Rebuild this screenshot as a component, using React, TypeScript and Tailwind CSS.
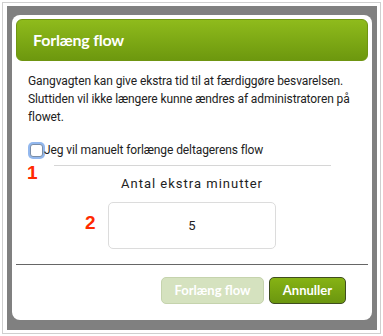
import React from "react";

export default function App() {
  return (
    <div className="w-[383px] h-[336px] bg-white p-[2px]" style={{ fontFamily: "Lato, 'Open Sans', sans-serif" }}>
      <div className="h-[332px] border border-[#cfcfcf] pt-[3px] pl-[4px] pr-[3px] pb-[3px]">
        <div className="h-[324px] bg-[#808080] pl-[5px] pr-[5px] pt-[9px]">
          <div className="relative h-[305px] rounded-[8px] bg-white p-[4px] flex flex-col">
            <div className="h-[42px] rounded-[6px] border border-[#6f9512] bg-gradient-to-b from-[#8fbb1c] to-[#6d980e] flex items-center pl-[16px]">
              <span className="text-white font-bold text-[16px] tracking-[-0.2px]">Forlæng flow</span>
            </div>
            <div className="pl-[12px] pr-[10px] mt-[11px] text-[12px] leading-[18px] text-[#222] tracking-[-0.1px]" style={{ fontFamily: "Roboto, sans-serif" }}>
              Gangvagten kan give ekstra tid til at færdiggøre besvarelsen. Sluttiden vil ikke længere kunne ændres af administratoren på flowet.
            </div>
            <div className="flex items-center pl-[14px] mt-[15px] h-[18px] text-[12px] text-[#222] tracking-[-0.1px]" style={{ fontFamily: "Roboto, sans-serif" }}>
              <span className="w-[13px] h-[13px] rounded-[3px] border border-[#7a8ea8] bg-white ring-[2px] ring-[#93b8ee]" />
              <span className="ml-[1px]">Jeg vil manuelt forlænge deltagerens flow</span>
            </div>
            <div className="mx-auto mt-[6px] w-[277px] h-px bg-[#d6d6d6]" />
            <div className="mt-[9px] text-center text-[13px] leading-[18px] tracking-[1px] text-[#222]" style={{ fontFamily: "Roboto, sans-serif" }}>Antal ekstra minutter</div>
            <div className="mx-auto mt-[9px] w-[168px] h-[47px] rounded-[5px] border border-[#dcdcdc] flex items-center justify-center text-[13px] text-[#222]" style={{ fontFamily: "Roboto, sans-serif" }}>
              5
            </div>
            <div className="mt-[15px] h-px bg-[#666]" />
            <div className="flex justify-end gap-[5px] pr-[22px] mt-[12px]">
              <div className="w-[103px] h-[27px] rounded-[5px] border border-[#c5d3ad] bg-[#d5e2bf] flex items-center justify-center text-white font-bold text-[13px]">
                Forlæng flow
              </div>
              <div className="w-[77px] h-[27px] rounded-[5px] border border-[#3f4d1f] bg-gradient-to-b from-[#86b314] to-[#6b960f] flex items-center justify-center text-white font-bold text-[13px]">
                Annuller
              </div>
            </div>
            <span className="absolute left-[15px] top-[148px] text-[#ff2a00] font-bold text-[19px] leading-none" style={{ fontFamily: "'Liberation Sans', Arial, sans-serif" }}>1</span>
            <span className="absolute left-[73px] top-[198px] text-[#ff2a00] font-bold text-[19px] leading-none" style={{ fontFamily: "'Liberation Sans', Arial, sans-serif" }}>2</span>
          </div>
        </div>
      </div>
    </div>
  );
}
